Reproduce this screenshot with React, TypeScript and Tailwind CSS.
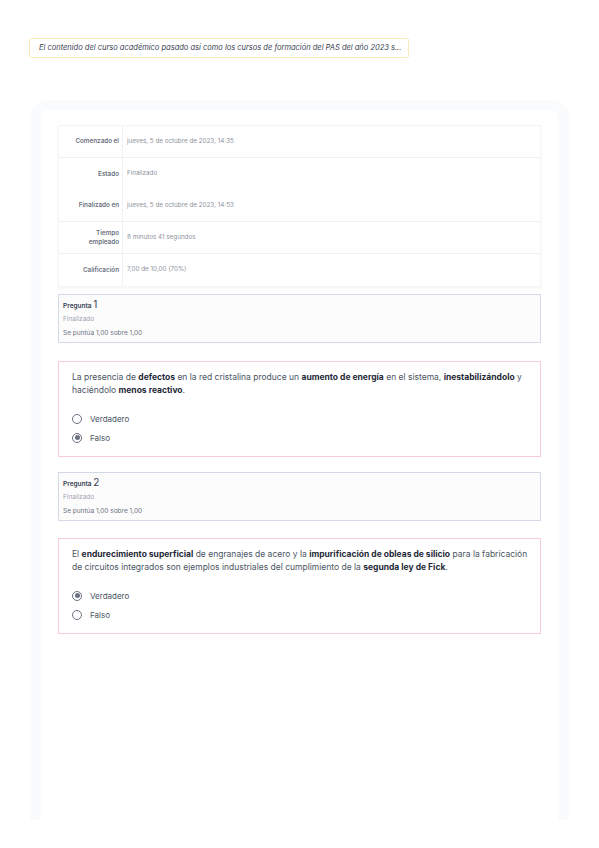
import React from 'react';

const rows: { label: string; value: string; line?: boolean }[] = [
  { label: 'Comenzado el', value: 'jueves, 5 de octubre de 2023, 14:35', line: true },
  { label: 'Estado', value: 'Finalizado' },
  { label: 'Finalizado en', value: 'jueves, 5 de octubre de 2023, 14:53', line: true },
  { label: 'Tiempo empleado', value: '8 minutos 41 segundos', line: true },
  { label: 'Calificación', value: '7,00 de 10,00 (70%)' },
];

const Radio: React.FC<{ checked?: boolean; label: string }> = ({ checked, label }) => (
  <div className="flex items-center gap-[8px] h-[19px]">
    <span className="flex items-center justify-center w-[10px] h-[10px] rounded-full border border-[#6b7280] bg-white">
      {checked && <span className="w-[5px] h-[5px] rounded-full bg-[#6b7280]" />}
    </span>
    <span className="text-[8px] text-[#4b5563]">{label}</span>
  </div>
);

const QuestionInfo: React.FC<{ n: number }> = ({ n }) => (
  <div className="border border-[#d3dae5] bg-[#fcfcfd] px-[4px] pt-[4px] pb-[5px] h-[49px]">
    <div className="text-[6.5px] font-semibold text-[#374151] leading-[11px]">
      Pregunta <span className="text-[10px] font-normal">{n}</span>
    </div>
    <div className="text-[6.5px] text-[#9ca3af] leading-[14px]">Finalizado</div>
    <div className="text-[6.5px] text-[#6b7280] leading-[14px]">Se puntúa 1,00 sobre 1,00</div>
  </div>
);

export default function App() {
  return (
    <div className="min-h-[848px] bg-white" style={{ fontFamily: 'Inter, "Noto Sans", sans-serif' }}>
      <div className="pt-[38px] pl-[29px]">
        <div className="w-[380px] h-[20px] border border-[#fcebbd] rounded-[2px] flex items-center pl-[9px]">
          <span className="text-[7.5px] italic text-[#374151] whitespace-nowrap">
            El contenido del curso académico pasado así como los cursos de formación del PAS del año 2023 s...
          </span>
        </div>
      </div>

      <div className="mt-[42px] mx-[30px] h-[720px] rounded-t-[18px] bg-[#fafbfc] px-[11px] pt-[10px]">
        <div className="h-full bg-white rounded-t-[6px] px-[17px] pt-[15px]">
          <div className="bg-white shadow-[0_2px_3px_rgba(0,0,0,0.04)] border border-[#f3f4f6]">
            {rows.map((r, i) => (
              <div
                key={i}
                className={`flex h-[32px] ${r.line ? 'border-b border-[#eef0f3]' : ''}`}
              >
                <div className="w-[64px] border-r border-[#eef0f3] flex items-center justify-end pr-[3px] text-right text-[6.3px] font-semibold text-[#6b7280] leading-[9px]">
                  {r.label === 'Tiempo empleado' ? (
                    <span>Tiempo<br />empleado</span>
                  ) : (
                    r.label
                  )}
                </div>
                <div className="flex items-center pl-[4px] text-[6.3px] text-[#8b929c]">{r.value}</div>
              </div>
            ))}
          </div>

          <div className="mt-[7px]">
            <QuestionInfo n={1} />
          </div>

          <div className="mt-[18px] border border-[#f8ccd7] h-[96px] pl-[13px] pr-[6px] pt-[9px]">
            <p className="text-[8.5px] leading-[13px] text-[#4b5563]">
              La presencia de <b className="text-[#1f2937]">defectos</b> en la red cristalina produce un{' '}
              <b className="text-[#1f2937]">aumento de energía</b> en el sistema,{' '}
              <b className="text-[#1f2937]">inestabilizándolo</b> y haciéndolo{' '}
              <b className="text-[#1f2937]">menos reactivo</b>.
            </p>
            <div className="mt-[12px]">
              <Radio label="Verdadero" />
              <Radio label="Falso" checked />
            </div>
          </div>

          <div className="mt-[15px]">
            <QuestionInfo n={2} />
          </div>

          <div className="mt-[17px] border border-[#f8ccd7] h-[96px] pl-[13px] pr-[6px] pt-[9px]">
            <p className="text-[8.5px] leading-[13px] text-[#4b5563]">
              El <b className="text-[#1f2937]">endurecimiento superficial</b> de engranajes de acero y la{' '}
              <b className="text-[#1f2937]">impurificación de obleas de silicio</b> para la fabricación{' '}
              <span className="whitespace-nowrap">de circuitos</span> integrados son ejemplos industriales del
              cumplimiento de la <b className="text-[#1f2937]">segunda ley de Fick</b>.
            </p>
            <div className="mt-[12px]">
              <Radio label="Verdadero" checked />
              <Radio label="Falso" />
            </div>
          </div>
        </div>
      </div>
    </div>
  );
}
